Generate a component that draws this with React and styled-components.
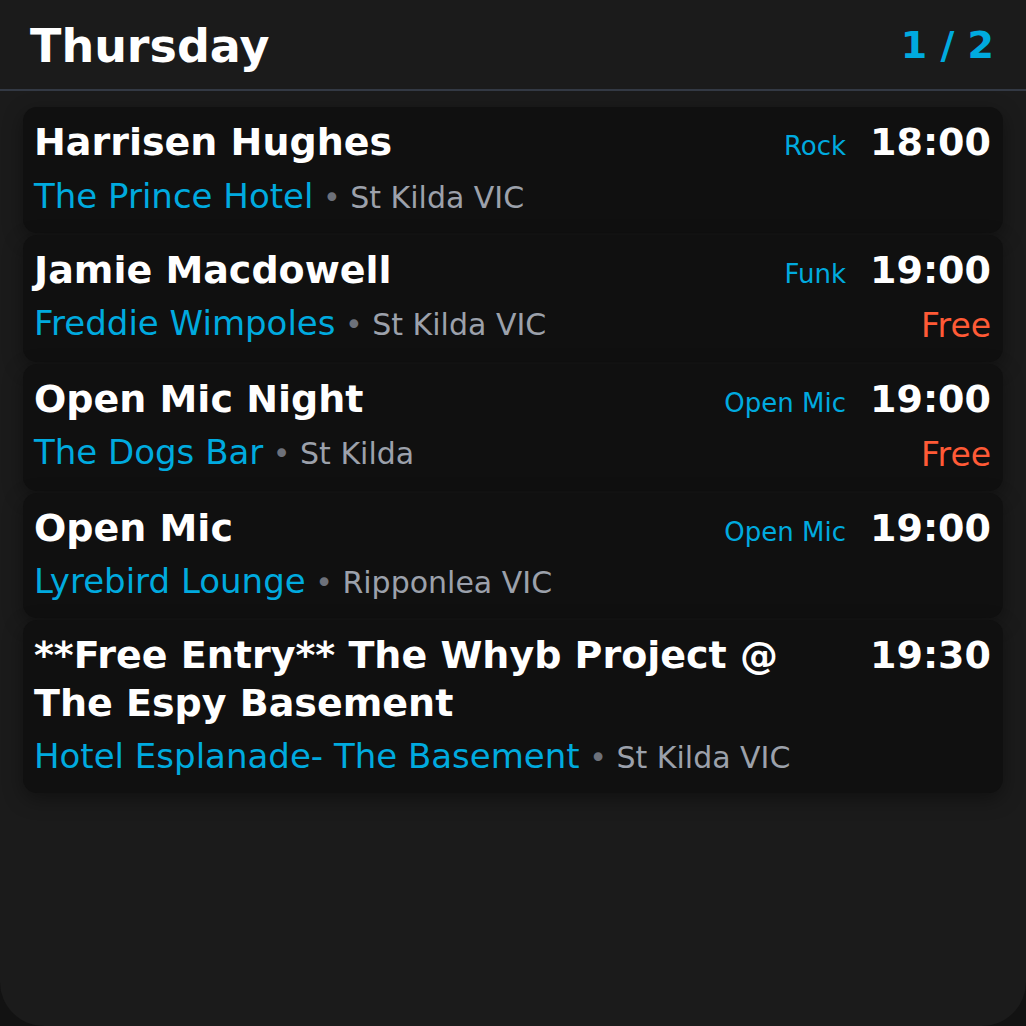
import React from 'react'
import styled, { createGlobalStyle } from 'styled-components'

const GlobalStyle = createGlobalStyle`
    html, body {
        margin: 0;
        padding: 0;
        background: #121212;
    }
    body {
        font-family: 'DejaVu Sans', 'Noto Sans', sans-serif;
    }
`

const Screen = styled.div`
    width: 1026px;
    height: 1026px;
    box-sizing: border-box;
    background: #1b1b1b;
    border-radius: 0 0 44px 44px;
    overflow: hidden;
    color: #fff;
`

const Header = styled.header`
    height: 89px;
    display: flex;
    align-items: center;
    justify-content: space-between;
    padding: 0 32px 0 30px;
    border-bottom: 2px solid #333944;
`

const Day = styled.h1`
    margin: 2px 0 0;
    font-size: 46px;
    font-weight: bold;
    color: #fff;
`

const Pager = styled.div`
    font-size: 38px;
    font-weight: bold;
    color: #00aadf;
`

const List = styled.div`
    display: flex;
    flex-direction: column;
    gap: 2px;
    padding: 16px 23px 0;
`

const Card = styled.div`
    display: flex;
    align-items: flex-start;
    gap: 24px;
    padding: 12px 12px 11px 11px;
    background: #101010;
    border-radius: 14px;
    box-shadow: 0 6px 20px rgba(0, 0, 0, 0.38);
`

const Main = styled.div`
    flex: 1;
    min-width: 0;
`

const Title = styled.div`
    font-size: 38px;
    font-weight: bold;
    line-height: 1.25;
`

const Place = styled.div`
    margin-top: 4px;
    font-size: 34px;
    line-height: 1.5;
    white-space: nowrap;
`

const Venue = styled.span`
    color: #00aadf;
`

const Suburb = styled.span`
    font-size: 30px;
    color: #9ca1ab;
`

const Dot = styled.span`
    color: #6d717a;
`

const Side = styled.div`
    display: flex;
    flex-direction: column;
    align-items: flex-end;
`

const TimeRow = styled.div`
    display: flex;
    align-items: baseline;
    gap: 24px;
    line-height: 1.25;
`

const Genre = styled.span`
    font-size: 26px;
    color: #00aadf;
`

const Time = styled.span`
    font-size: 38px;
    font-weight: bold;
`

const Price = styled.div`
    margin-top: 7px;
    font-size: 33px;
    line-height: 1.5;
    color: #ff5a36;
`

const gigs = [
    { title: 'Harrisen Hughes', venue: 'The Prince Hotel', suburb: 'St Kilda VIC', genre: 'Rock', time: '18:00' },
    { title: 'Jamie Macdowell', venue: 'Freddie Wimpoles', suburb: 'St Kilda VIC', genre: 'Funk', time: '19:00', free: true },
    { title: 'Open Mic Night', venue: 'The Dogs Bar', suburb: 'St Kilda', genre: 'Open Mic', time: '19:00', free: true },
    { title: 'Open Mic', venue: 'Lyrebird Lounge', suburb: 'Ripponlea VIC', genre: 'Open Mic', time: '19:00' },
    { title: '**Free Entry** The Whyb Project @ The Espy Basement', venue: 'Hotel Esplanade- The Basement', suburb: 'St Kilda VIC', time: '19:30' },
]

export default function App() {
    return (
        <>
            <GlobalStyle />
            <Screen>
                <Header>
                    <Day>Thursday</Day>
                    <Pager>1 / 2</Pager>
                </Header>
                <List>
                    {gigs.map((g, i) => (
                        <Card key={i}>
                            <Main>
                                <Title>{g.title}</Title>
                                <Place>
                                    <Venue>{g.venue}</Venue>
                                    <Suburb> <Dot>•</Dot> {g.suburb}</Suburb>
                                </Place>
                            </Main>
                            <Side>
                                <TimeRow>
                                    {g.genre && <Genre>{g.genre}</Genre>}
                                    <Time>{g.time}</Time>
                                </TimeRow>
                                {g.free && <Price>Free</Price>}
                            </Side>
                        </Card>
                    ))}
                </List>
            </Screen>
        </>
    )
}
